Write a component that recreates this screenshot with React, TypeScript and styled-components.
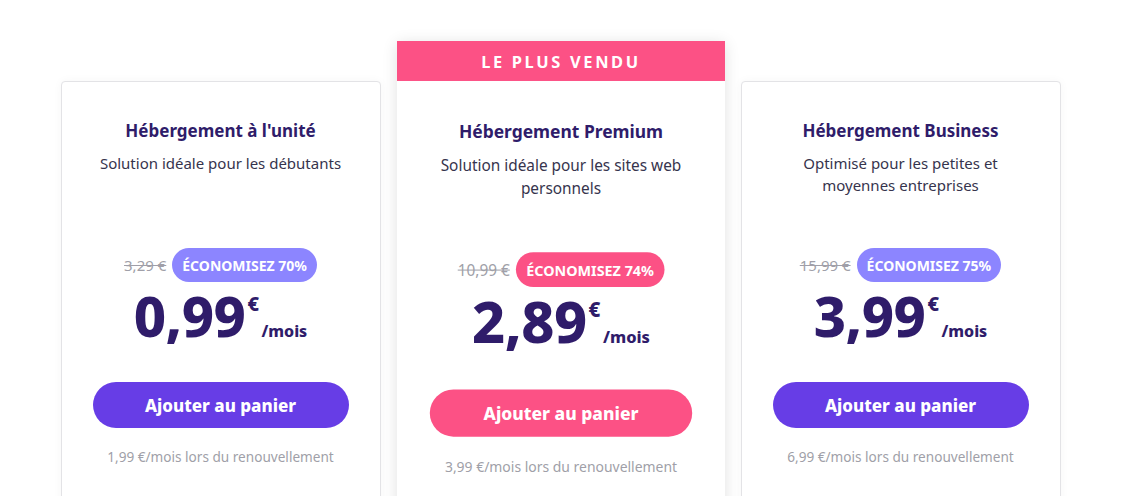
import styled, { createGlobalStyle, css } from 'styled-components';

const GlobalStyle = createGlobalStyle`
  html, body {
    margin: 0;
    padding: 0;
    background: #ffffff;
    font-family: 'Noto Sans', 'Lato', sans-serif;
    overflow: hidden;
  }
  * {
    box-sizing: border-box;
  }
`;

interface IPlan {
  id: string;
  title: string;
  description: string;
  oldPrice: string;
  discount: string;
  price: string;
  renewal: string;
  featured?: boolean;
}

const PLANS: IPlan[] = [
  {
    id: 'single',
    title: "Hébergement à l'unité",
    description: 'Solution idéale pour les débutants',
    oldPrice: '3,29 €',
    discount: 'ÉCONOMISEZ 70%',
    price: '0,99',
    renewal: '1,99 €/mois lors du renouvellement',
  },
  {
    id: 'premium',
    title: 'Hébergement Premium',
    description: 'Solution idéale pour les sites web personnels',
    oldPrice: '10,99 €',
    discount: 'ÉCONOMISEZ 74%',
    price: '2,89',
    renewal: '3,99 €/mois lors du renouvellement',
    featured: true,
  },
  {
    id: 'business',
    title: 'Hébergement Business',
    description: 'Optimisé pour les petites et moyennes entreprises',
    oldPrice: '15,99 €',
    discount: 'ÉCONOMISEZ 75%',
    price: '3,99',
    renewal: '6,99 €/mois lors du renouvellement',
  },
];

const PlanCard = ({ plan }: { plan: IPlan }) => {
  const featured = !!plan.featured;
  return (
    <Column $featured={featured}>
      {featured && <Ribbon>LE PLUS VENDU</Ribbon>}
      <Card $featured={featured}>
        <Title>{plan.title}</Title>
        <Description>{plan.description}</Description>
        <DiscountRow>
          <OldPrice>{plan.oldPrice}</OldPrice>
          <Badge $featured={featured}>{plan.discount}</Badge>
        </DiscountRow>
        <PriceRow>
          <Amount>{plan.price}</Amount>
          <PriceSide>
            <Currency>€</Currency>
            <Period>/mois</Period>
          </PriceSide>
        </PriceRow>
        <CartButton $featured={featured}>Ajouter au panier</CartButton>
        <Renewal>{plan.renewal}</Renewal>
      </Card>
    </Column>
  );
};

const App = () => {
  return (
    <>
      <GlobalStyle />
      <Page>
        <Plans>
          {PLANS.map((plan) => (
            <PlanCard key={plan.id} plan={plan} />
          ))}
        </Plans>
      </Page>
    </>
  );
};

export default App;

const Page = styled.div`
  width: 100%;
  height: 496px;
  padding-top: 41px;
  padding-right: 2px;
  overflow: hidden;
`;

const Plans = styled.div`
  display: flex;
  justify-content: center;
  align-items: flex-start;
  gap: 20px;
`;

const Column = styled.div<{ $featured: boolean }>`
  width: 320px;
  display: flex;
  flex-direction: column;
  ${({ $featured }) =>
    $featured
      ? css`
          transform: scale(1.025);
          transform-origin: 50% 0;
          box-shadow: 0 2px 14px rgba(0, 0, 0, 0.12);
          position: relative;
          z-index: 1;
        `
      : css`
          margin-top: 40px;
        `}
`;

const Ribbon = styled.div`
  height: 39px;
  background-color: #fc5185;
  color: #ffffff;
  font-size: 16px;
  font-weight: 700;
  letter-spacing: 2.6px;
  display: flex;
  align-items: center;
  justify-content: center;
`;

const Card = styled.div<{ $featured: boolean }>`
  background-color: #ffffff;
  border: 1px solid ${({ $featured }) => ($featured ? '#ffffff' : '#e3e3e6')};
  border-radius: ${({ $featured }) => ($featured ? '0 0 4px 4px' : '4px')};
  box-shadow: ${({ $featured }) => ($featured ? 'none' : '0 0 10px rgba(0, 0, 0, 0.04)')};
  padding: 36px 31px 60px;
  display: flex;
  flex-direction: column;
  align-items: center;
  text-align: center;
`;

const Title = styled.h3`
  margin: 0;
  font-size: 17px;
  line-height: 26px;
  font-weight: 700;
  color: #2f1c6a;
`;

const Description = styled.p`
  margin: 8px 0 0;
  min-height: 44px;
  font-size: 15px;
  line-height: 22px;
  color: #36344d;
`;

const DiscountRow = styled.div`
  margin-top: 52px;
  display: flex;
  align-items: center;
  gap: 6px;
`;

const OldPrice = styled.span`
  font-size: 15px;
  color: #a09fa8;
  text-decoration: line-through;
`;

const Badge = styled.span<{ $featured: boolean }>`
  height: 34px;
  padding: 0 10px;
  border-radius: 17px;
  display: inline-flex;
  align-items: center;
  font-size: 14px;
  font-weight: 700;
  color: #ffffff;
  background-color: ${({ $featured }) => ($featured ? '#fc5185' : '#8c85ff')};
`;

const PriceRow = styled.div`
  margin-top: 3px;
  display: flex;
  align-items: flex-start;
  color: #2f1c6a;
`;

const Amount = styled.span`
  font-size: 56px;
  line-height: 60px;
  font-weight: 800;
  letter-spacing: -0.5px;
`;

const PriceSide = styled.span`
  display: flex;
  flex-direction: column;
  align-items: flex-start;
  padding-top: 9px;
`;

const Currency = styled.span`
  font-size: 20px;
  line-height: 20px;
  font-weight: 800;
  margin-left: 2px;
`;

const Period = styled.span`
  font-size: 16px;
  line-height: 22px;
  font-weight: 800;
  margin-left: 16px;
  margin-top: 6px;
`;

const CartButton = styled.button<{ $featured: boolean }>`
  margin-top: 37px;
  width: 100%;
  height: 46px;
  border: none;
  border-radius: 23px;
  background-color: ${({ $featured }) => ($featured ? '#fc5185' : '#673de6')};
  color: #ffffff;
  font-family: inherit;
  font-size: 17px;
  font-weight: 800;
  cursor: pointer;
`;

const Renewal = styled.p`
  margin: 19px 0 0;
  font-size: 13.6px;
  line-height: 20px;
  color: #a09fa8;
`;
